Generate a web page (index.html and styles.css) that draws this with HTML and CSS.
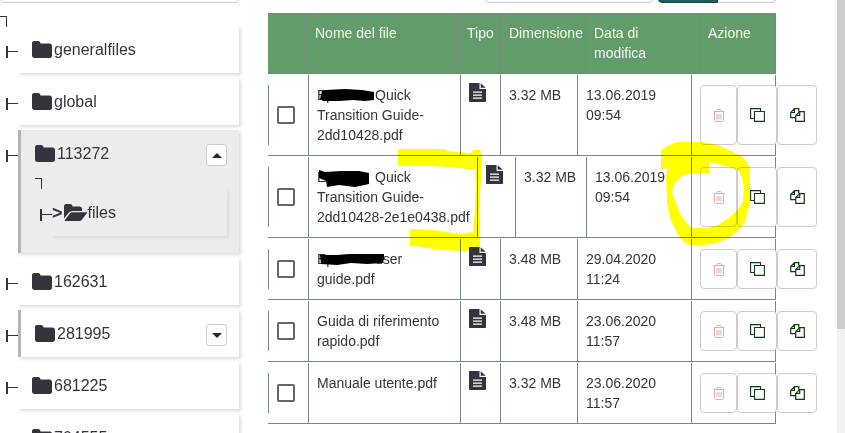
FILE: index.html
```html
<!DOCTYPE html>
<html lang="it">
<head>
<meta charset="utf-8">
<title>Gestione file</title>
<link rel="stylesheet" href="styles.css">
</head>
<body>
<svg class="defs" aria-hidden="true">
  <symbol id="folder" viewBox="0 0 20 17"><path d="M2 0h4c1.500 0 2.500 1 2.500 2.500h9C19 2.500 20 3.500 20 5v9.500c0 1.500-1 2.500-2.500 2.500h-15C1 17 0 16 0 14.500v-12C0 1 .7 0 2 0z"/></symbol>
  <symbol id="folder-open" viewBox="0 0 23 17"><path d="M2 0h4c1.500 0 2.500 1 2.500 2.500h7c1.500 0 2.500 1 2.500 2.500v2H8.500C7 7 5.500 7.700 4.500 9L0 14.500v-12C0 1 .7 0 2 0z"/><path d="M8.500 8.300h14c.6 0 .6.500.3 1l-5 6.500c-.6.800-1.600 1.200-2.600 1.200H1.300c-.6 0-.8-.5-.4-1l5-6.500c.6-.8 1.600-1.200 2.600-1.200z"/></symbol>
  <symbol id="document" viewBox="0 0 17 19"><path fill-rule="evenodd" d="M1 0h9.500v6H17v12c0 .6-.4 1-1 1H1c-.6 0-1-.4-1-1V1c0-.6.4-1 1-1zM4 8.500v1.300h9V8.500zM4 11.500v1.300h9v-1.300zM4 14.500v1.300h9v-1.300z"/><path d="M11.700 0.300L16.700 4.800h-5z"/></symbol>
  <symbol id="trash" viewBox="0 0 12 13"><path fill="none" stroke="currentColor" d="M.5 2.500h11M3.500 2.500l.7-2h3.600l.7 2M1.500 2.500v9c0 .6.400 1 1 1h7c.6 0 1-.4 1-1v-9M4 5v5.500M6 5v5.500M8 5v5.500"/></symbol>
  <symbol id="copy" viewBox="0 0 15 14"><path fill="none" stroke="currentColor" stroke-width="1.100" d="M4.500 3.500h9.900v9.900H4.500zM4.500 10.500H.6V.6h9.900v2.900"/></symbol>
  <symbol id="duplicate" viewBox="0 0 15 14"><path fill="none" stroke="currentColor" stroke-width="1.200" d="M5.600 9.700H.7V4.500L4.500.7h4.300v3M4.500.7v3.800H.7M9.700 3.600h4.600v9.700H5.700V7.400zM9.700 3.600v3.800h-4"/></symbol>
</svg>
<div class="app">
  <aside class="sidebar">
    <div class="toolbar"><input class="field search" type="text" aria-label="Cerca cartella"></div>
    <div class="corner"></div>
    <ul class="tree">
      <li class="node"><a class="label" href="#"><svg class="folder"><use href="#folder"/></svg>generalfiles</a></li>
      <li class="node"><a class="label" href="#"><svg class="folder"><use href="#folder"/></svg>global</a></li>
      <li class="node parent open">
        <div class="node-head"><a class="label" href="#"><svg class="folder"><use href="#folder"/></svg>113272</a><button class="toggle" aria-label="Comprimi"><span class="caret up"></span></button></div>
        <div class="corner"></div>
        <ul class="tree nested">
          <li class="node"><a class="label" href="#"><b>&gt;</b><svg class="folder wide"><use href="#folder-open"/></svg>files</a></li>
        </ul>
      </li>
      <li class="node"><a class="label" href="#"><svg class="folder"><use href="#folder"/></svg>162631</a></li>
      <li class="node parent">
        <div class="node-head"><a class="label" href="#"><svg class="folder"><use href="#folder"/></svg>281995</a><button class="toggle" aria-label="Espandi"><span class="caret"></span></button></div>
      </li>
      <li class="node"><a class="label" href="#"><svg class="folder"><use href="#folder"/></svg>681225</a></li>
      <li class="node"><a class="label" href="#"><svg class="folder"><use href="#folder"/></svg>704555</a></li>
    </ul>
  </aside>
  <main class="content">
    <div class="toolbar actions">
      <input class="field filter" type="text" aria-label="Filtra file">
      <div class="split"><button class="primary" aria-label="Cerca"></button><button class="secondary" aria-label="Annulla"></button></div>
    </div>
    <table class="files">
      <thead>
        <tr><th aria-label="Seleziona"></th><th>Nome del file</th><th>Tipo</th><th>Dimensione</th><th>Data di modifica</th><th>Azione</th></tr>
      </thead>
      <tbody>
        <tr>
          <td class="pick"><input type="checkbox" aria-label="Seleziona riga 1"></td>
          <td><span class="redacted">Ep<svg class="ink" viewBox="0 0 72 20"><path d="M5 6L8 5 28 4 45 5 57 7V15L48 16 36 15 22 16 6 16 3 14z"/></svg></span>Quick<br>Transition Guide-<br>2dd10428.pdf</td>
          <td><svg class="document"><use href="#document"/></svg></td>
          <td>3.32 MB</td><td>13.06.2019 09:54</td>
          <td class="buttons"><button class="delete" aria-label="Elimina"><svg><use href="#trash"/></svg></button><button aria-label="Copia"><svg><use href="#copy"/></svg></button><button aria-label="Duplica"><svg><use href="#duplicate"/></svg></button></td>
        </tr>
        <tr class="long-name">
          <td class="pick"><input type="checkbox" aria-label="Seleziona riga 2"></td>
          <td><span class="redacted">E<svg class="ink" viewBox="0 0 72 20"><path d="M2 3L8 5 24 4 42 4 52 6 52 17 38 20 22 18 10 20 9 14 2 11z"/></svg></span>Quick<br>Transition Guide-<br><span class="unbroken">2dd10428-2e1e0438.pdf</span></td>
          <td><svg class="document"><use href="#document"/></svg></td>
          <td>3.32 MB</td><td>13.06.2019 09:54</td>
          <td class="buttons"><button class="delete" aria-label="Elimina"><svg><use href="#trash"/></svg></button><button aria-label="Copia"><svg><use href="#copy"/></svg></button><button aria-label="Duplica"><svg><use href="#duplicate"/></svg></button></td>
        </tr>
        <tr>
          <td class="pick"><input type="checkbox" aria-label="Seleziona riga 3"></td>
          <td><span class="redacted">Ep<svg class="ink" viewBox="0 0 72 20"><path d="M3 6L20 6 32 5 67 5V10L66 14 50 15 34 14 20 16 4 15z"/></svg></span>user<br>guide.pdf</td>
          <td><svg class="document"><use href="#document"/></svg></td>
          <td>3.48 MB</td><td>29.04.2020 11:24</td>
          <td class="buttons"><button class="delete" aria-label="Elimina"><svg><use href="#trash"/></svg></button><button aria-label="Copia"><svg><use href="#copy"/></svg></button><button aria-label="Duplica"><svg><use href="#duplicate"/></svg></button></td>
        </tr>
        <tr>
          <td class="pick"><input type="checkbox" aria-label="Seleziona riga 4"></td>
          <td>Guida di riferimento rapido.pdf</td>
          <td><svg class="document"><use href="#document"/></svg></td>
          <td>3.48 MB</td><td>23.06.2020 11:57</td>
          <td class="buttons"><button class="delete" aria-label="Elimina"><svg><use href="#trash"/></svg></button><button aria-label="Copia"><svg><use href="#copy"/></svg></button><button aria-label="Duplica"><svg><use href="#duplicate"/></svg></button></td>
        </tr>
        <tr>
          <td class="pick"><input type="checkbox" aria-label="Seleziona riga 5"></td>
          <td>Manuale utente.pdf</td>
          <td><svg class="document"><use href="#document"/></svg></td>
          <td>3.32 MB</td><td>23.06.2020 11:57</td>
          <td class="buttons"><button class="delete" aria-label="Elimina"><svg><use href="#trash"/></svg></button><button aria-label="Copia"><svg><use href="#copy"/></svg></button><button aria-label="Duplica"><svg><use href="#duplicate"/></svg></button></td>
        </tr>
      </tbody>
    </table>
  </main>
  <div class="scrollbar"><div class="thumb"></div></div>
  <svg class="marker" viewBox="0 0 845 433" aria-hidden="true">
    <path d="M398 149H445L447 151 470 153 474 150H480L482 155 482 166 480 190V249L465 251 440 250 410 245V229L433 230 460 234 473 232 475 210 476 185 475 170 450 167 430 166H398z"/>
    <path fill-rule="evenodd" d="M661 150L669 145 677 142H702L718 145 733 152 743 157 748 163 750 170 750 202 745 222 737 232 728 238 717 243 704 245H690L684 242 677 233 670 218 667 202 666 175 668 167 661 170zM672 192L674 184 682 176 692 173H709V162L730 167 739 171 742 178 744 188 743 200 740 207 730 217 718 225 708 228H692L687 224 680 213z"/>
  </svg>
</div>
</body>
</html>
```
FILE: styles.css
```css
*, *::before { box-sizing: border-box; }

body {
  margin: 0;
  background: #fff;
  color: #34343f;
  font-family: "Liberation Sans", Arial, sans-serif;
  font-size: 14px;
  line-height: 20px;
}

button, input { font: inherit; margin: 0; padding: 0; }
ul { list-style: none; margin: 0; padding: 0; }
svg { fill: currentColor; }
.defs { display: none; }

.app {
  position: relative;
  display: grid;
  grid-template-columns: minmax(0, 239fr) minmax(0, 598fr) 8px;
  grid-template-rows: 100%;
  height: 100vh;
  overflow: hidden;
}

.content { padding-left: 29px; padding-right: 61px; }

/* The toolbars are scrolled almost out of view. */
.toolbar {
  display: flex;
  align-items: flex-end;
  height: 3px;
  overflow: hidden;
}
.field {
  flex: none;
  height: 38px;
  border: 1px solid #ccc;
  border-radius: 4px;
  background: #fff;
}
.search { width: 100%; }
.actions { justify-content: flex-end; gap: 5px; }
.filter { width: 33%; }
.split { display: flex; flex: none; width: 118px; }
.split button { height: 38px; border: 1px solid #ccc; background: #fff; }
.split .primary { flex: 1; border-color: #173f46; border-radius: 4px 0 0 4px; background: #1e5c5e; }
.split .secondary { flex: 1; border-left: 0; border-radius: 0 4px 4px 0; }

.corner {
  width: 7px;
  height: 11px;
  margin-top: 13px;
  border-top: 1px solid #34343f;
  border-right: 1px solid #34343f;
}

.tree {
  display: flex;
  flex-direction: column;
  gap: 5px;
  padding-left: 18px;
  font-size: 16px;
}
.node {
  position: relative;
  min-height: 47px;
  padding: 0 12px 0 14px;
  box-shadow: 2px 2px 3px #ddd;
}
.node::before {
  content: "";
  position: absolute;
  top: 20px;
  right: 100%;
  width: 12px;
  height: 12px;
  border-left: 2px solid #34343f;
  background: linear-gradient(#34343f, #34343f) 0 5px / 100% 1px no-repeat;
}
.label {
  display: flex;
  align-items: center;
  gap: 2px;
  height: 47px;
  color: inherit;
  text-decoration: none;
}
.folder { width: 20px; height: 17px; }
.folder.wide { width: 23px; }
.node-head { display: flex; align-items: center; justify-content: space-between; }
.parent { border-left: 3px solid #b5b5b5; }
.parent::before { margin-right: 3px; }
.open { padding-bottom: 17px; background: #ececec; }
.open > .corner { margin-top: 1px; }
.toggle {
  display: grid;
  place-items: center;
  width: 21px;
  height: 22px;
  margin-top: 3px;
  border: 1px solid #ccc;
  border-radius: 3px;
  background: #fff;
}
.caret { border: 5px solid transparent; border-top-color: #0c3b12; border-bottom: 0; }
.caret.up { border: 5px solid transparent; border-bottom-color: #0c3b12; border-top: 0; }
.nested { padding-left: 17px; }
.nested .node { padding: 0; box-shadow: 2px 2px 3px #dcdcdc; }
.nested .label { gap: 1px; }
.nested b { font-size: 18px; }

.sidebar > .tree { margin-top: -1px; }

.files { display: block; margin-top: 10px; }
.files thead, .files tbody { display: block; }
.files tr {
  display: grid;
  grid-template-columns: 41fr 152fr 40fr 77fr 114fr 84fr;
  padding-top: 1px;
  border-bottom: 1px solid #758a78;
}
.files thead tr {
  grid-template-columns: 39fr 152fr 42fr 85fr 114fr 76fr;
  min-height: 61px;
  padding: 0;
  background: #629c6b;
}
.files .long-name { grid-template-columns: 41fr 169fr 38fr 71fr 105fr 84fr; }
.files th, .files td {
  min-width: 0;
  padding: 10px 8px;
  border-right: 1px solid #758a78;
  text-align: left;
  font-weight: normal;
}
.files th { padding-right: 0; color: #f2f6f2; }
.files th:nth-child(5) { padding-right: 16px; }
.files .pick {
  display: grid;
  place-items: center start;
  padding: 10px 0;
  background: linear-gradient(#758a78, #758a78) 0 0 / 1px 100% no-repeat content-box;
}
.pick input {
  appearance: none;
  width: 18px;
  height: 18px;
  margin-left: 9px;
  border: 2px solid #666;
  border-radius: 2px;
  background: #fff;
}
.document { display: block; width: 17px; height: 19px; margin-top: -2px; }
.unbroken { white-space: nowrap; }
.redacted { position: relative; display: inline-block; width: 58px; }
.ink { position: absolute; top: 0; left: 0; width: 72px; height: 20px; fill: #000; }

.files .buttons { display: flex; }
.buttons button {
  display: grid;
  place-items: center;
  flex: none;
  width: 40px;
  border: 1px solid #ccc;
  border-radius: 4px;
  background: #fff;
  color: #123b18;
}
.buttons .delete { width: 37px; color: #e9aaa4; }
.buttons svg { width: 15px; height: 14px; }
.buttons .delete svg { width: 12px; height: 13px; }

.scrollbar { background: #f0f0f0; }
.thumb { height: 76%; background: #cdcdcd; }

/* Highlighter strokes drawn over the page. */
.marker {
  position: absolute;
  top: 0;
  left: 0;
  width: 845px;
  height: 433px;
  fill: #ff0;
  mix-blend-mode: multiply;
  pointer-events: none;
}
```
